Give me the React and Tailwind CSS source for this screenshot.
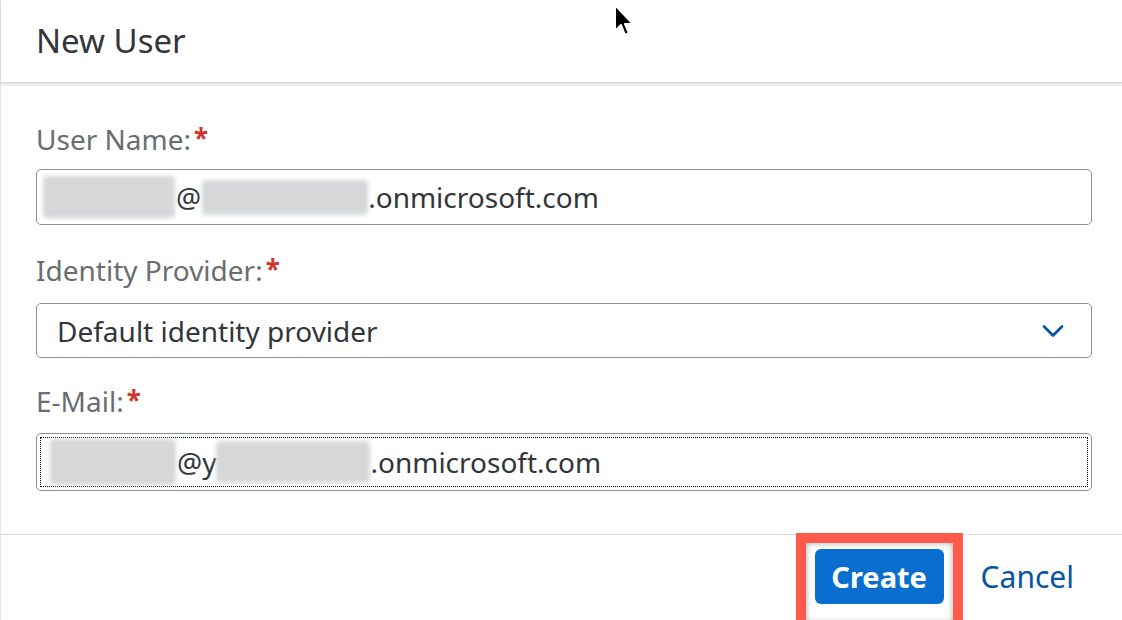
import React from "react";
import { ChevronDown } from "lucide-react";

function Blur({ w, h }) {
  return (
    <span
      className="inline-block shrink-0 bg-[#d6d7d8] blur-[2px] rounded-sm"
      style={{ width: w, height: h }}
    />
  );
}

function Label({ children }) {
  return (
    <div className="flex items-start text-[28px] leading-none text-[#6a6d70]">
      <span>{children}</span>
      <span className="ml-[3px] text-[#d0342c] font-bold text-[26px] leading-none">*</span>
    </div>
  );
}

export default function App() {
  return (
    <div className="relative w-[1122px] h-[620px] overflow-hidden bg-white font-['Noto_Sans',sans-serif] text-[#32363a]">
      <div className="flex flex-col h-full border-l border-[#e5e5e5]">
        <header className="h-[83px] shrink-0 flex items-center px-[35px] border-b border-[#d9d9d9] shadow-[0_2px_3px_rgba(0,0,0,0.12)] relative z-10">
          <h1 className="text-[33px] text-[#32363a]">New User</h1>
        </header>

        <main className="flex-1 px-[35px] pt-[42px] flex flex-col">
          <Label>User Name:</Label>
          <div className="mt-[16px] h-[56px] w-[1056px] border border-[#89919a] rounded-[5px] flex items-center pl-[6px] text-[28px] text-[#32363a]">
            <Blur w={132} h={42} />
            <span className="px-[1px]">@</span>
            <Blur w={166} h={35} />
            <span>.onmicrosoft.com</span>
          </div>

          <div className="mt-[31px]">
            <Label>Identity Provider:</Label>
          </div>
          <div className="mt-[19px] h-[55px] w-[1056px] border border-[#89919a] rounded-[5px] flex items-center justify-between pl-[20px] pr-[20px] text-[28px] text-[#32363a]">
            <span>Default identity provider</span>
            <ChevronDown className="w-[36px] h-[36px] text-[#0854a0]" strokeWidth={1.8} />
          </div>

          <div className="mt-[29px]">
            <Label>E-Mail:</Label>
          </div>
          <div className="mt-[18px] h-[58px] w-[1056px] border border-[#89919a] rounded-[5px] p-[3px]">
            <div className="h-full w-full border border-dotted border-[#000] flex items-center pl-[9px] text-[28px] text-[#32363a]">
              <Blur w={126} h={46} />
              <span className="pl-[1px]">@y</span>
              <Blur w={154} h={42} />
              <span>.onmicrosoft.com</span>
            </div>
          </div>
        </main>

        <footer className="h-[86px] shrink-0 border-t border-[#d9d9d9] flex items-start justify-end pr-[48px] pt-[14px] gap-[37px]">
          <div className="relative">
            <button className="h-[55px] w-[129px] rounded-[6px] bg-[#0a6ed1] text-white text-[29px] font-bold">
              Create
            </button>
            <div className="absolute -left-[19px] -top-[16px] w-[167px] h-[100px] border-[10px] border-[#fd5a4b] shadow-[inset_0_0_6px_rgba(0,0,0,0.35)]" />
          </div>
          <button className="h-[55px] text-[30px] text-[#0854a0]">Cancel</button>
        </footer>
      </div>

      <svg className="absolute left-[612px] top-[3px]" width="24" height="36" viewBox="0 0 24 36">
        <path d="M3 2 L3 28 L9 22 L13 32 L17 30 L13 21 L21 21 Z" fill="#000" stroke="#fff" strokeWidth="2" strokeLinejoin="round" />
      </svg>
    </div>
  );
}
